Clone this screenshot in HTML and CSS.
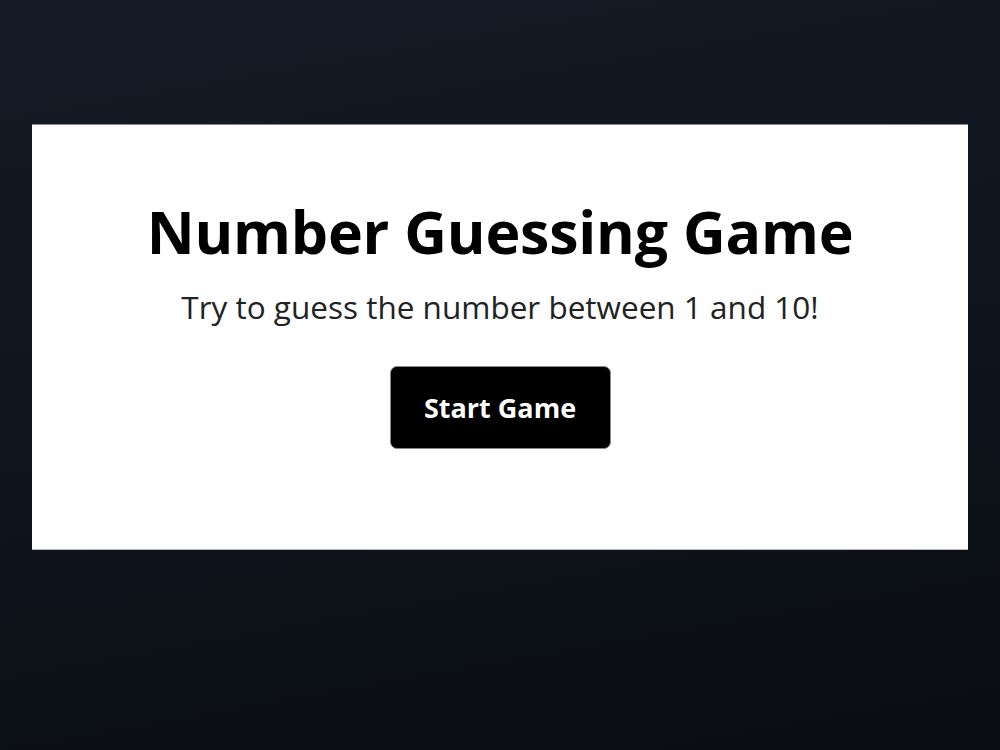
FILE: index.html
```html
<!DOCTYPE html>
<html lang="en">
<head>
<meta charset="utf-8">
<title>Number Guessing Game</title>
<link rel="stylesheet" href="styles.css">
</head>
<body>
<main class="page">
  <section class="card">
    <h1 class="title">Number Guessing Game</h1>
    <p class="subtitle">Try to guess the number between 1 and 10!</p>
    <button class="start-btn" type="button">Start Game</button>
  </section>
</main>
</body>
</html>
```

FILE: styles.css
```css
html, body {
  margin: 0;
  padding: 0;
  height: 100%;
}
body {
  background: linear-gradient(170deg, #141b26 0%, #0f141d 50%, #0a0d12 100%);
  font-family: "Open Sans", "Noto Sans", sans-serif;
}
.page {
  box-sizing: border-box;
  height: 750px;
  padding: 124px 32px 0 32px;
}
.card {
  box-sizing: border-box;
  height: 426px;
  background: #ffffff;
  border-top: 1px solid #8a8a8e;
  border-bottom: 1px solid #b8b8ba;
  display: flex;
  flex-direction: column;
  align-items: center;
  padding-top: 66px;
}
.title {
  margin: 0;
  font-size: 59px;
  font-weight: 700;
  line-height: 80px;
  letter-spacing: -0.2px;
  color: #000;
}
.subtitle {
  margin: 15px 0 0 0;
  font-size: 31.5px;
  line-height: 42px;
  color: #222;
}
.start-btn {
  margin-top: 38px;
  width: 221px;
  height: 83px;
  border: 1px solid #888;
  border-radius: 7px;
  background: #000;
  color: #fff;
  font-family: "Open Sans", "Noto Sans", sans-serif;
  font-weight: 700;
  font-size: 27px;
  cursor: pointer;
}
```
